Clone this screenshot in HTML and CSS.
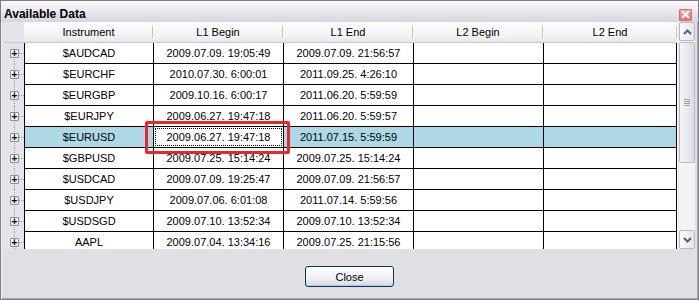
FILE: index.html
```html
<!DOCTYPE html>
<html lang="en">
<head>
  <meta charset="UTF-8">
  <meta name="viewport" content="width=device-width, initial-scale=1.0">
  <title>Available Data</title>
  <link rel="stylesheet" href="styles.css">
</head>
<body>
  <div class="window">
    <div class="titlebar">
      <span class="title">Available Data</span>
      <span class="close-x">
        <svg width="9" height="9" viewBox="0 0 9 9"><path d="M1 1L8 8M8 1L1 8" stroke="#fff" stroke-width="2"/></svg>
      </span>
    </div>

    <div class="grid-area">
      <div class="grid">
        <div class="row head">
          <div class="rh"></div>
          <div class="hc">Instrument</div>
          <div class="hc">L1 Begin</div>
          <div class="hc">L1 End</div>
          <div class="hc">L2 Begin</div>
          <div class="hc">L2 End</div>
        </div>
        <div class="row first">
          <div class="rh"><span class="exp">+</span></div>
          <div class="c">$AUDCAD</div><div class="c">2009.07.09. 19:05:49</div><div class="c">2009.07.09. 21:56:57</div><div class="c"></div><div class="c last"></div>
        </div>
        <div class="row">
          <div class="rh"><span class="exp">+</span></div>
          <div class="c">$EURCHF</div><div class="c">2010.07.30. 6:00:01</div><div class="c">2011.09.25. 4:26:10</div><div class="c"></div><div class="c last"></div>
        </div>
        <div class="row">
          <div class="rh"><span class="exp">+</span></div>
          <div class="c">$EURGBP</div><div class="c">2009.10.16. 6:00:17</div><div class="c">2011.06.20. 5:59:59</div><div class="c"></div><div class="c last"></div>
        </div>
        <div class="row">
          <div class="rh"><span class="exp">+</span></div>
          <div class="c">$EURJPY</div><div class="c">2009.06.27. 19:47:18</div><div class="c">2011.06.20. 5:59:57</div><div class="c"></div><div class="c last"></div>
        </div>
        <div class="row selected">
          <div class="rh"><span class="exp">+</span></div>
          <div class="c">$EURUSD</div><div class="c focus">2009.06.27. 19:47:18</div><div class="c">2011.07.15. 5:59:59</div><div class="c"></div><div class="c last"></div>
        </div>
        <div class="row">
          <div class="rh"><span class="exp">+</span></div>
          <div class="c">$GBPUSD</div><div class="c">2009.07.25. 15:14:24</div><div class="c">2009.07.25. 15:14:24</div><div class="c"></div><div class="c last"></div>
        </div>
        <div class="row">
          <div class="rh"><span class="exp">+</span></div>
          <div class="c">$USDCAD</div><div class="c">2009.07.09. 19:25:47</div><div class="c">2009.07.09. 21:56:57</div><div class="c"></div><div class="c last"></div>
        </div>
        <div class="row">
          <div class="rh"><span class="exp">+</span></div>
          <div class="c">$USDJPY</div><div class="c">2009.07.06. 6:01:08</div><div class="c">2011.07.14. 5:59:56</div><div class="c"></div><div class="c last"></div>
        </div>
        <div class="row">
          <div class="rh"><span class="exp">+</span></div>
          <div class="c">$USDSGD</div><div class="c">2009.07.10. 13:52:34</div><div class="c">2009.07.10. 13:52:34</div><div class="c"></div><div class="c last"></div>
        </div>
        <div class="row">
          <div class="rh"><span class="exp">+</span></div>
          <div class="c">AAPL</div><div class="c">2009.07.04. 13:34:16</div><div class="c">2009.07.25. 21:15:56</div><div class="c"></div><div class="c last"></div>
        </div>
      </div>

      <!-- vertical scrollbar -->
      <div class="scrollbar">
        <div class="sb-btn">
          <svg width="9" height="6" viewBox="0 0 9 6"><path d="M1 5L4.5 1.5L8 5" fill="none" stroke="#4d6185" stroke-width="2"/></svg>
        </div>
        <div class="sb-track">
          <div class="sb-thumb">
            <span class="grip"></span><span class="grip"></span><span class="grip"></span><span class="grip"></span>
          </div>
        </div>
        <div class="sb-btn">
          <svg width="9" height="6" viewBox="0 0 9 6"><path d="M1 1L4.5 4.5L8 1" fill="none" stroke="#4d6185" stroke-width="2"/></svg>
        </div>
      </div>
    </div>

    <div class="footer">
      <button class="close-btn">Close</button>
    </div>
  </div>
</body>
</html>
```

FILE: styles.css
```css
/* General styles */
body {
  margin: 0;
  padding: 0;
  font-family: "Liberation Sans", Arial, sans-serif;
  font-size: 11px;
  color: #000;
  background-color: #e0dfe3;
}
.window {
  width: 699px;
  height: 300px;
  box-sizing: border-box;
  border: 1px solid #7d7d8c;
  padding: 0 3px 3px 3px;
  background-color: #e0dfe3;
  box-shadow: inset 1px 1px 0 #f4f4f8, inset -1px -1px 0 #a8a8b4;
  display: flex;
  flex-direction: column;
}

/* Title bar */
.titlebar {
  height: 21px;
  margin: 0 -3px;
  padding: 0 6px 0 3px;
  display: flex;
  align-items: center;
  justify-content: space-between;
  background: linear-gradient(#fbfbfd, #ececf2 40%, #d6d6de);
}
.title {
  font-weight: bold;
  font-size: 12px;
  padding-top: 4px;
}
.close-x {
  width: 11px;
  height: 10px;
  margin-top: 6px;
  display: flex;
  align-items: center;
  justify-content: center;
  border: 1px solid #d07272;
  border-radius: 1px;
  background: linear-gradient(#f2a8a0, #e0766c);
}

/* Data grid */
.grid-area {
  height: 227px;
  display: flex;
  background-color: #fff;
}
.grid {
  width: 673px;
  overflow: hidden;
}
.row {
  display: grid;
  grid-template-columns: 20px 129px 130px 130px 130px 134px;
  height: 21px;
}
.row.head {
  height: 21px;
  background: linear-gradient(#fdfdfe, #f3f3f6 70%, #e6e6ea);
  border-bottom: 1px solid #c9c9cf;
  box-sizing: border-box;
}
.hc {
  position: relative;
  text-align: center;
  line-height: 20px;
}
.hc::after {
  content: "";
  position: absolute;
  right: 0;
  top: 4px;
  bottom: 4px;
  width: 1px;
  background-color: #c7c5b2;
  box-shadow: 1px 0 0 #fff;
}
.hc:first-of-type::before {
  content: "";
}
.c {
  border-left: 1px solid #000;
  border-bottom: 1px solid #000;
  text-align: center;
  line-height: 20px;
  white-space: nowrap;
}
.c.last {
  border-right: 1px solid #000;
}
.selected .c {
  background-color: #add8e6;
}
.selected .c.focus {
  background-color: #fff;
  position: relative;
}
.c.focus::before {
  content: "";
  position: absolute;
  left: 1px;
  right: 1px;
  top: 1px;
  bottom: 1px;
  border: 1px dotted #000;
}
/* red annotation frame */
.c.focus::after {
  content: "";
  position: absolute;
  left: -9px;
  right: -7px;
  top: -6px;
  bottom: -7px;
  border: 3px solid #e8262c;
  border-radius: 2px;
}

/* Row headers with tree expanders */
.rh {
  position: relative;
  background-color: #e4e4ea;
}
.row.head .rh {
  background-color: #e4e4ea;
}
.row:not(.head) .rh::before {
  content: "";
  position: absolute;
  left: 10px;
  top: 0;
  bottom: 0;
  border-left: 1px dotted #a0a0a0;
}
.row.first .rh::before {
  top: 10px;
}
.row:not(.head) .rh::after {
  content: "";
  position: absolute;
  left: 13px;
  right: 0;
  top: 10px;
  border-top: 1px dotted #a0a0a0;
}
.exp {
  position: absolute;
  left: 6px;
  top: 6px;
  z-index: 1;
  width: 7px;
  height: 7px;
  border: 1px solid #8c8c98;
  border-radius: 1px;
  background: linear-gradient(#fff, #e6e6ea);
  font-size: 10px;
  line-height: 7px;
  text-align: center;
  font-weight: bold;
}

/* Scrollbar */
.scrollbar {
  width: 17px;
  margin-left: 1px;
  display: flex;
  flex-direction: column;
  background-color: #f3f3f6;
  border-left: 1px solid #e8e8ec;
  box-sizing: border-box;
}
.sb-btn {
  height: 17px;
  display: flex;
  align-items: center;
  justify-content: center;
  border: 1px solid #b8b8c6;
  border-radius: 2px;
  background: linear-gradient(90deg, #fdfdff, #e3e3ea);
}
.sb-track {
  flex: 1;
  padding-top: 1px;
}
.sb-thumb {
  height: 121px;
  box-sizing: border-box;
  border: 1px solid #b8b8c6;
  border-radius: 2px;
  background: linear-gradient(90deg, #f6f6f9, #dcdce4);
  display: flex;
  flex-direction: column;
  align-items: center;
  justify-content: center;
  gap: 1px;
}
.grip {
  width: 6px;
  height: 1px;
  background-color: #9a9aa8;
}

/* Footer */
.footer {
  flex: 1;
  display: flex;
  justify-content: center;
  align-items: flex-start;
  padding-top: 17px;
}
.close-btn {
  width: 89px;
  height: 21px;
  padding: 0;
  font-family: "Liberation Sans", Arial, sans-serif;
  font-size: 11px;
  color: #000;
  border: 1px solid #003c74;
  border-radius: 3px;
  background: linear-gradient(#ffffff, #f0f0f4 60%, #d8d8e2);
  box-shadow: inset 0 -1px 0 #c4c4d0;
}
```
